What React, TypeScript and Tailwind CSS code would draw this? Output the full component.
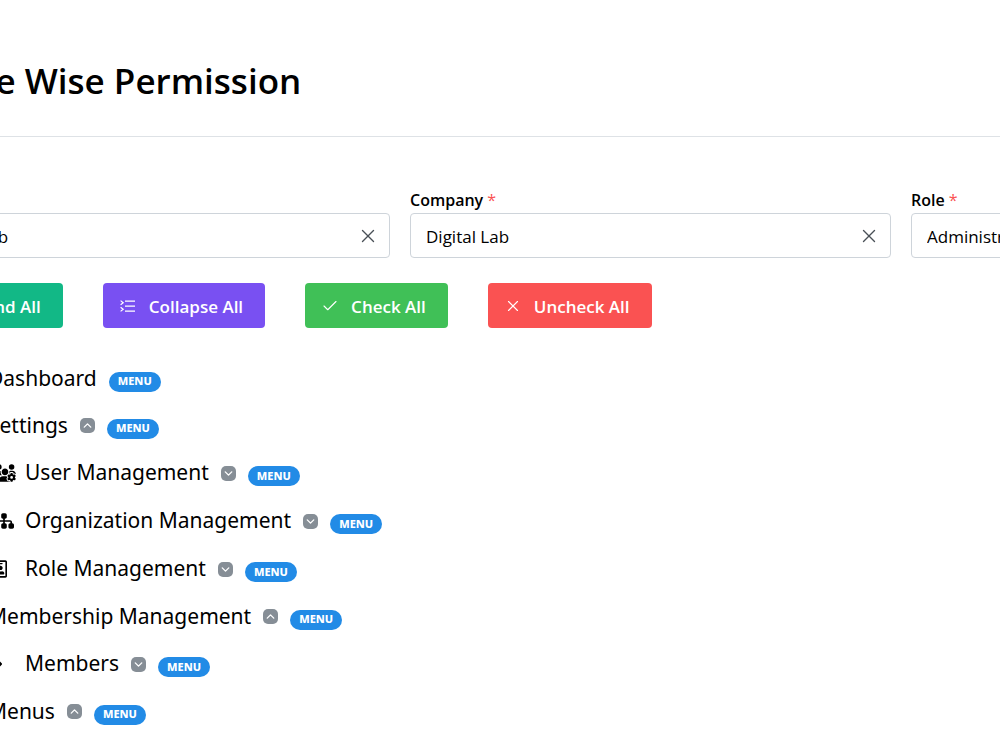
import type { ReactNode } from "react";
import type { IconType } from "react-icons";
import { FaRegIdBadge } from "react-icons/fa";
import { FaCaretRight, FaSitemap, FaUsersGear } from "react-icons/fa6";
import { Check, ChevronDown, ChevronUp, X } from "lucide-react";

type Item = {
  label: string;
  icon?: IconType;
  iconClass?: string;
  open?: boolean;
  children?: Item[];
};

const menus: Item[] = [
  { label: "Dashboard" },
  {
    label: "Settings",
    open: true,
    children: [
      { label: "User Management", icon: FaUsersGear, iconClass: "w-[22px]", open: false },
      { label: "Organization Management", icon: FaSitemap, iconClass: "w-5", open: false },
      { label: "Role Management", icon: FaRegIdBadge, iconClass: "w-[13px]", open: false },
    ],
  },
  {
    label: "Membership Management",
    open: true,
    children: [{ label: "Members", icon: FaCaretRight, iconClass: "w-2", open: false }],
  },
  { label: "Menus", open: true, children: [{ label: "Main Menu" }] },
];

function ListIcon() {
  return (
    <svg
      className="h-3 w-[15px]"
      viewBox="0 0 15 12"
      fill="none"
      stroke="currentColor"
      strokeWidth="1.2"
    >
      <path d="M5 1.2h10M5 6.2h10M5 11.2h10" />
      <path d="M.6.6 3.2 2.7.6 4.8M.6 7.2l2.6 2.1-2.6 2.1" />
    </svg>
  );
}

function Field({ id, label, value }: { id: string; label: string; value: string }) {
  return (
    <div>
      <label htmlFor={id} className="block text-[16px] leading-[26px] font-semibold">
        {label} <span className="font-normal text-[#fa5252]">*</span>
      </label>
      <div className="relative">
        <input
          id={id}
          defaultValue={value}
          className="block h-[45px] w-full rounded border border-[#ced4da] bg-white pt-0.5 pr-11 pl-[15px] text-[17px] text-black outline-none"
        />
        <button
          type="button"
          aria-label={`Clear ${label}`}
          className="absolute inset-y-0 right-0 flex w-11 items-center justify-center text-[#495057]"
        >
          <X className="size-[22px]" strokeWidth={1.5} />
        </button>
      </div>
    </div>
  );
}

function ActionButton({
  color,
  icon,
  children,
}: {
  color: string;
  icon: ReactNode;
  children: ReactNode;
}) {
  return (
    <button
      type="button"
      className={`flex h-[45px] shrink-0 items-center gap-3 rounded pr-[22px] pl-4 text-[17px] font-semibold text-white ${color}`}
    >
      <span className="flex w-[18px] justify-center">{icon}</span>
      <span className="pt-0.5">{children}</span>
    </button>
  );
}

function TreeItem({ item, nested }: { item: Item; nested?: boolean }) {
  const Icon = item.icon;
  const Chevron = item.open ? ChevronUp : ChevronDown;

  return (
    <li>
      <div
        className={`flex items-center gap-3 ${nested ? "h-12 pl-[85px]" : "h-[47px] pl-[79px]"}`}
      >
        {nested && (
          <span className="flex w-[19px] shrink-0">
            {Icon && <Icon className={`h-[18px] shrink-0 ${item.iconClass}`} />}
          </span>
        )}
        <span className="text-[21px] whitespace-nowrap">{item.label}</span>
        {item.open !== undefined && (
          <button
            type="button"
            aria-label={item.open ? "Collapse" : "Expand"}
            aria-expanded={item.open}
            className="flex size-[15px] shrink-0 items-center justify-center rounded-[5px] bg-[#868e96] text-white"
          >
            <Chevron className="size-[13px]" strokeWidth={2.5} />
          </button>
        )}
        <span className="mt-1.5 flex h-5 w-[52px] shrink-0 items-center justify-center rounded-full bg-[#228be6] text-[11px] font-extrabold text-white">
          MENU
        </span>
      </div>
      {item.children && (
        <ul>
          {item.children.map((child) => (
            <TreeItem key={child.label} item={child} nested />
          ))}
        </ul>
      )}
    </li>
  );
}

export default function App() {
  return (
    <div className="h-screen overflow-hidden bg-white font-['Open_Sans',sans-serif] text-black">
      <main className="-ml-[91px] w-[calc(100%+483px)]">
        <header className="border-b border-[#dee2e6] pt-14 pb-[30px] pl-[33px]">
          <h1 className="text-[35px] leading-[50px] font-semibold">Role Wise Permission</h1>
        </header>

        <form className="mt-[50px] grid grid-cols-3 gap-5">
          <Field id="group" label="Group" value="Digital Lab" />
          <Field id="company" label="Company" value="Digital Lab" />
          <Field id="role" label="Role" value="Administrator" />
        </form>

        <div className="mt-[25px] flex gap-10">
          <ActionButton color="bg-[#12b886]" icon={<ListIcon />}>
            Expand All
          </ActionButton>
          <ActionButton color="bg-[#7950f2]" icon={<ListIcon />}>
            Collapse All
          </ActionButton>
          <ActionButton color="bg-[#40c057]" icon={<Check className="size-5" strokeWidth={1.5} />}>
            Check All
          </ActionButton>
          <ActionButton color="bg-[#fa5252]" icon={<X className="size-5" strokeWidth={1.5} />}>
            Uncheck All
          </ActionButton>
        </div>

        <ul className="mt-[27px] font-['Noto_Sans',sans-serif]">
          {menus.map((item) => (
            <TreeItem key={item.label} item={item} />
          ))}
        </ul>
      </main>
    </div>
  );
}
